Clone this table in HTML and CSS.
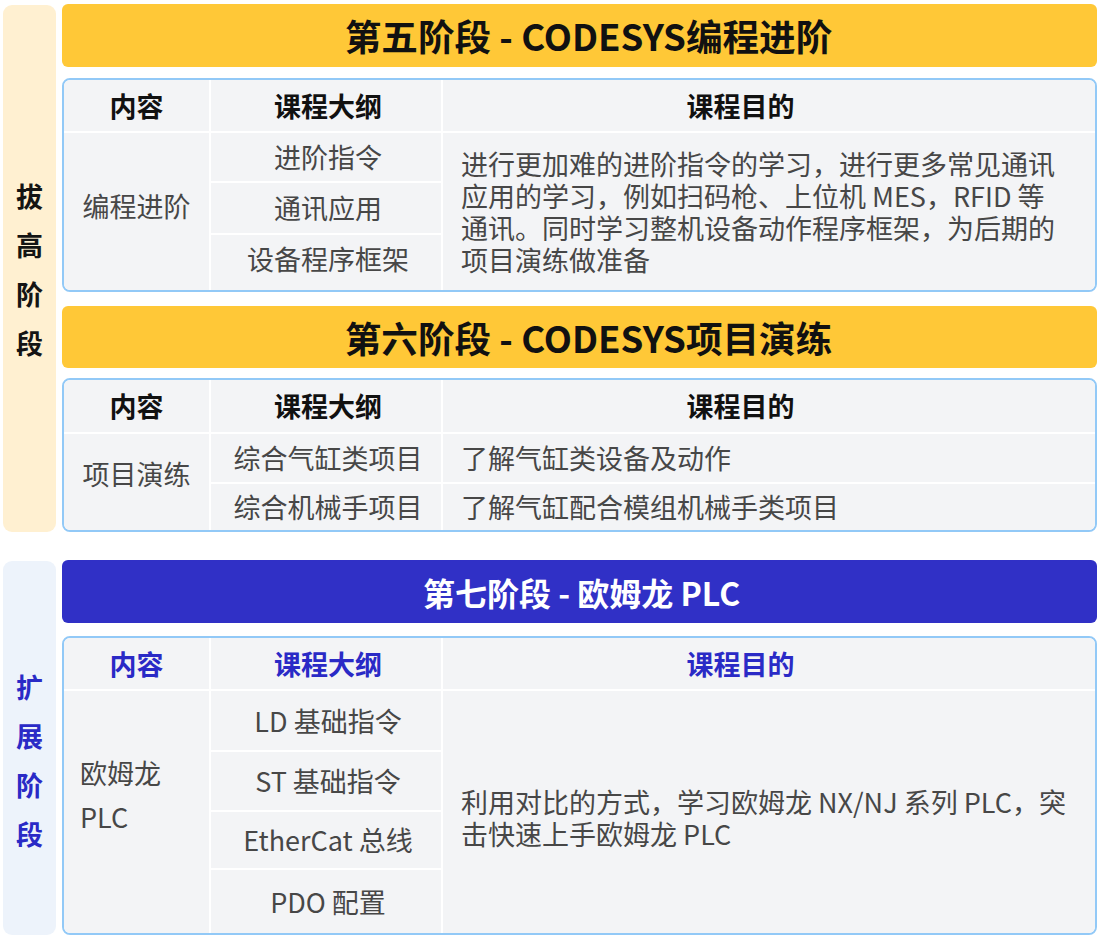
FILE: index.html
```html
<!DOCTYPE html>
<html lang="zh-CN">
<head>
<meta charset="utf-8">
<title>课程阶段</title>
<link rel="stylesheet" href="styles.css">
</head>
<body>
<div class="page">
  <section class="group">
    <div class="side side-gold"><div class="side-label"><span>拔</span><span>高</span><span>阶</span><span>段</span></div></div>
    <div class="main">
      <div class="banner banner-gold">第五阶段 - CODESYS编程进阶</div>
      <div class="tbl tbl-1">
        <div class="cell head">内容</div>
        <div class="cell head c2">课程大纲</div>
        <div class="cell head head-goal">课程目的</div>
        <div class="cell c1 span3 c1-up">编程进阶</div>
        <div class="cell c2">进阶指令</div>
        <div class="cell c3 span3">进行更加难的进阶指令的学习，进行更多常见通讯应用的学习，例如扫码枪、上位机 MES，RFID 等通讯。同时学习整机设备动作程序框架，为后期的项目演练做准备</div>
        <div class="cell c2">通讯应用</div>
        <div class="cell c2 row-up">设备程序框架</div>
      </div>
      <div class="banner banner-gold banner-2">第六阶段 - CODESYS项目演练</div>
      <div class="tbl tbl-2">
        <div class="cell head">内容</div>
        <div class="cell head c2">课程大纲</div>
        <div class="cell head head-goal">课程目的</div>
        <div class="cell c1 span2 c1-up-small">项目演练</div>
        <div class="cell c2">综合气缸类项目</div>
        <div class="cell c3">了解气缸类设备及动作</div>
        <div class="cell c2">综合机械手项目</div>
        <div class="cell c3">了解气缸配合模组机械手类项目</div>
      </div>
    </div>
  </section>
  <section class="group">
    <div class="side side-blue"><div class="side-label side-label-blue"><span>扩</span><span>展</span><span>阶</span><span>段</span></div></div>
    <div class="main">
      <div class="banner banner-blue">第七阶段 - 欧姆龙 PLC</div>
      <div class="tbl tbl-3">
        <div class="cell head head-blue">内容</div>
        <div class="cell head head-blue c2">课程大纲</div>
        <div class="cell head head-blue head-goal">课程目的</div>
        <div class="cell c1 span4 c1-left">欧姆龙<br>PLC</div>
        <div class="cell c2">LD 基础指令</div>
        <div class="cell c3 span4 c3-down">利用对比的方式，学习欧姆龙 NX/NJ 系列 PLC，突击快速上手欧姆龙 PLC</div>
        <div class="cell c2">ST 基础指令</div>
        <div class="cell c2">EtherCat 总线</div>
        <div class="cell c2">PDO 配置</div>
      </div>
    </div>
  </section>
</div>
</body>
</html>
```
FILE: styles.css
```css
* { box-sizing: border-box; }
html, body { margin: 0; padding: 0; background: #ffffff; }
body {
  font-family: "Noto Sans CJK SC", "Noto Sans", "Liberation Sans", sans-serif;
  color: #474747;
  width: 1100px;
}
.page {
  padding: 4px 3px 0 3px;
  display: flex;
  flex-direction: column;
  gap: 28px;
}
.group {
  display: flex;
  gap: 6px;
}
.side {
  width: 53px;
  flex: none;
  border-radius: 9px;
  display: flex;
  align-items: center;
  justify-content: center;
  margin-top: 1px;
}
.side-gold { background: #fff0d1; }
.side-blue { background: #edf3fb; }
.side-label {
  display: flex;
  flex-direction: column;
  align-items: center;
  font-size: 27px;
  font-weight: 700;
  color: #141414;
}
.side-label span { line-height: 49px; }
.side-label-blue { color: #2a2ac6; padding-top: 24px; }
.main {
  flex: 1;
  display: flex;
  flex-direction: column;
}
.banner {
  height: 63px;
  border-radius: 6px;
  display: flex;
  align-items: center;
  justify-content: center;
  font-size: 36.6px;
  font-weight: 700;
  padding-left: 18px;
}
.banner-gold { background: #ffc837; color: #111111; }
.banner-2 { margin-top: 14px; height: 62px; }
.banner-blue {
  background: #3030c6;
  color: #ffffff;
  padding-left: 4px;
  font-size: 32px;
}
.tbl {
  border: 2px solid #92c9f7;
  border-radius: 8px;
  background: #ffffff;
  overflow: hidden;
  display: grid;
  grid-template-columns: 145px 230px 1fr;
  gap: 2px;
}
.tbl-1 { margin-top: 11px; grid-template-rows: 51px 48px 50px 55px; }
.tbl-2 { margin-top: 10px; grid-template-rows: 52px 48px 46px; }
.tbl-3 { margin-top: 13px; grid-template-rows: 51px 59px 58px 56px 63px; }
.cell {
  background: #f3f4f6;
  display: flex;
  align-items: center;
  justify-content: center;
  font-size: 27px;
  line-height: 32px;
  text-align: center;
}
.head {
  font-weight: 700;
  color: #111111;
}
.head-goal { padding-right: 57px; }
.head-blue { color: #2a2ac6; }
.c2 { padding-left: 4px; }
.span2 { grid-row: span 2; }
.span3 { grid-row: span 3; }
.span4 { grid-row: span 4; }
.c1-up { padding-bottom: 12px; }
.c1-up-small { padding-bottom: 16px; }
.row-up { padding-bottom: 8px; }
.c1-left {
  justify-content: flex-start;
  text-align: left;
  padding-left: 16px;
  line-height: 44px;
  padding-bottom: 34px;
}
.c3 {
  justify-content: flex-start;
  text-align: left;
  padding: 0 26px 0 18px;
}
.c3-down { padding-top: 12px; }
```
